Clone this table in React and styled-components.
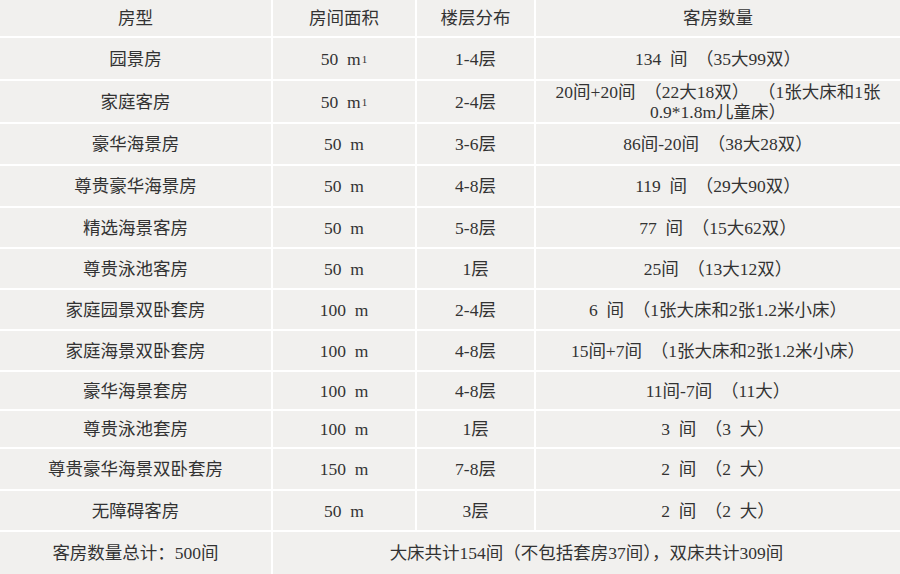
import React from "react";
import styled, { createGlobalStyle } from "styled-components";

const Global = createGlobalStyle`
  html, body { margin: 0; padding: 0; background: #ffffff; }
  body { font-family: "Liberation Serif", "Noto Sans CJK SC", serif; }
`;

const Table = styled.div`
  display: grid;
  width: 900px;
  grid-template-columns: 271px 142px 117px 364px;
  grid-template-rows: 36px 41px 41px 40px 40px 39px 39px 39px 39px 37px 36px 40px 39px 42px;
  gap: 2px;
  background: #ffffff;
`;

const Cell = styled.div`
  background: #f1f0ee;
  color: #333333;
  font-size: 17.5px;
  line-height: 20px;
  display: flex;
  align-items: center;
  justify-content: center;
  text-align: center;
  white-space: pre;
  grid-column: ${(p) => (p.$span ? `span ${p.$span}` : "auto")};
`;

const Sup = styled.sup`
  font-size: 11px;
  line-height: 0;
  vertical-align: 6px;
  margin-left: 1px;
`;

const rows = [
  ["园景房", "50  m", true, "1-4层", "134  间  （35大99双）"],
  ["家庭客房", "50  m", true, "2-4层", "20间+20间  （22大18双）  （1张大床和1张\n0.9*1.8m儿童床）"],
  ["豪华海景房", "50  m", false, "3-6层", "86间-20间  （38大28双）"],
  ["尊贵豪华海景房", "50  m", false, "4-8层", "119  间  （29大90双）"],
  ["精选海景客房", "50  m", false, "5-8层", "77  间  （15大62双）"],
  ["尊贵泳池客房", "50  m", false, "1层", "25间  （13大12双）"],
  ["家庭园景双卧套房", "100  m", false, "2-4层", "6  间  （1张大床和2张1.2米小床）"],
  ["家庭海景双卧套房", "100  m", false, "4-8层", "15间+7间  （1张大床和2张1.2米小床）"],
  ["豪华海景套房", "100  m", false, "4-8层", "11间-7间  （11大）"],
  ["尊贵泳池套房", "100  m", false, "1层", "3  间  （3  大）"],
  ["尊贵豪华海景双卧套房", "150  m", false, "7-8层", "2  间  （2  大）"],
  ["无障碍客房", "50  m", false, "3层", "2  间  （2  大）"],
];

export default function App() {
  return (
    <>
      <Global />
      <Table>
        <Cell>房型</Cell>
        <Cell>房间面积</Cell>
        <Cell>楼层分布</Cell>
        <Cell>客房数量</Cell>
        {rows.map(([name, area, sup, floor, count]) => (
          <React.Fragment key={name}>
            <Cell>{name}</Cell>
            <Cell>
              {area}
              {sup && <Sup>1</Sup>}
            </Cell>
            <Cell>{floor}</Cell>
            <Cell>{count}</Cell>
          </React.Fragment>
        ))}
        <Cell>客房数量总计：500间</Cell>
        <Cell $span={3}>大床共计154间（不包括套房37间），双床共计309间</Cell>
      </Table>
    </>
  );
}
